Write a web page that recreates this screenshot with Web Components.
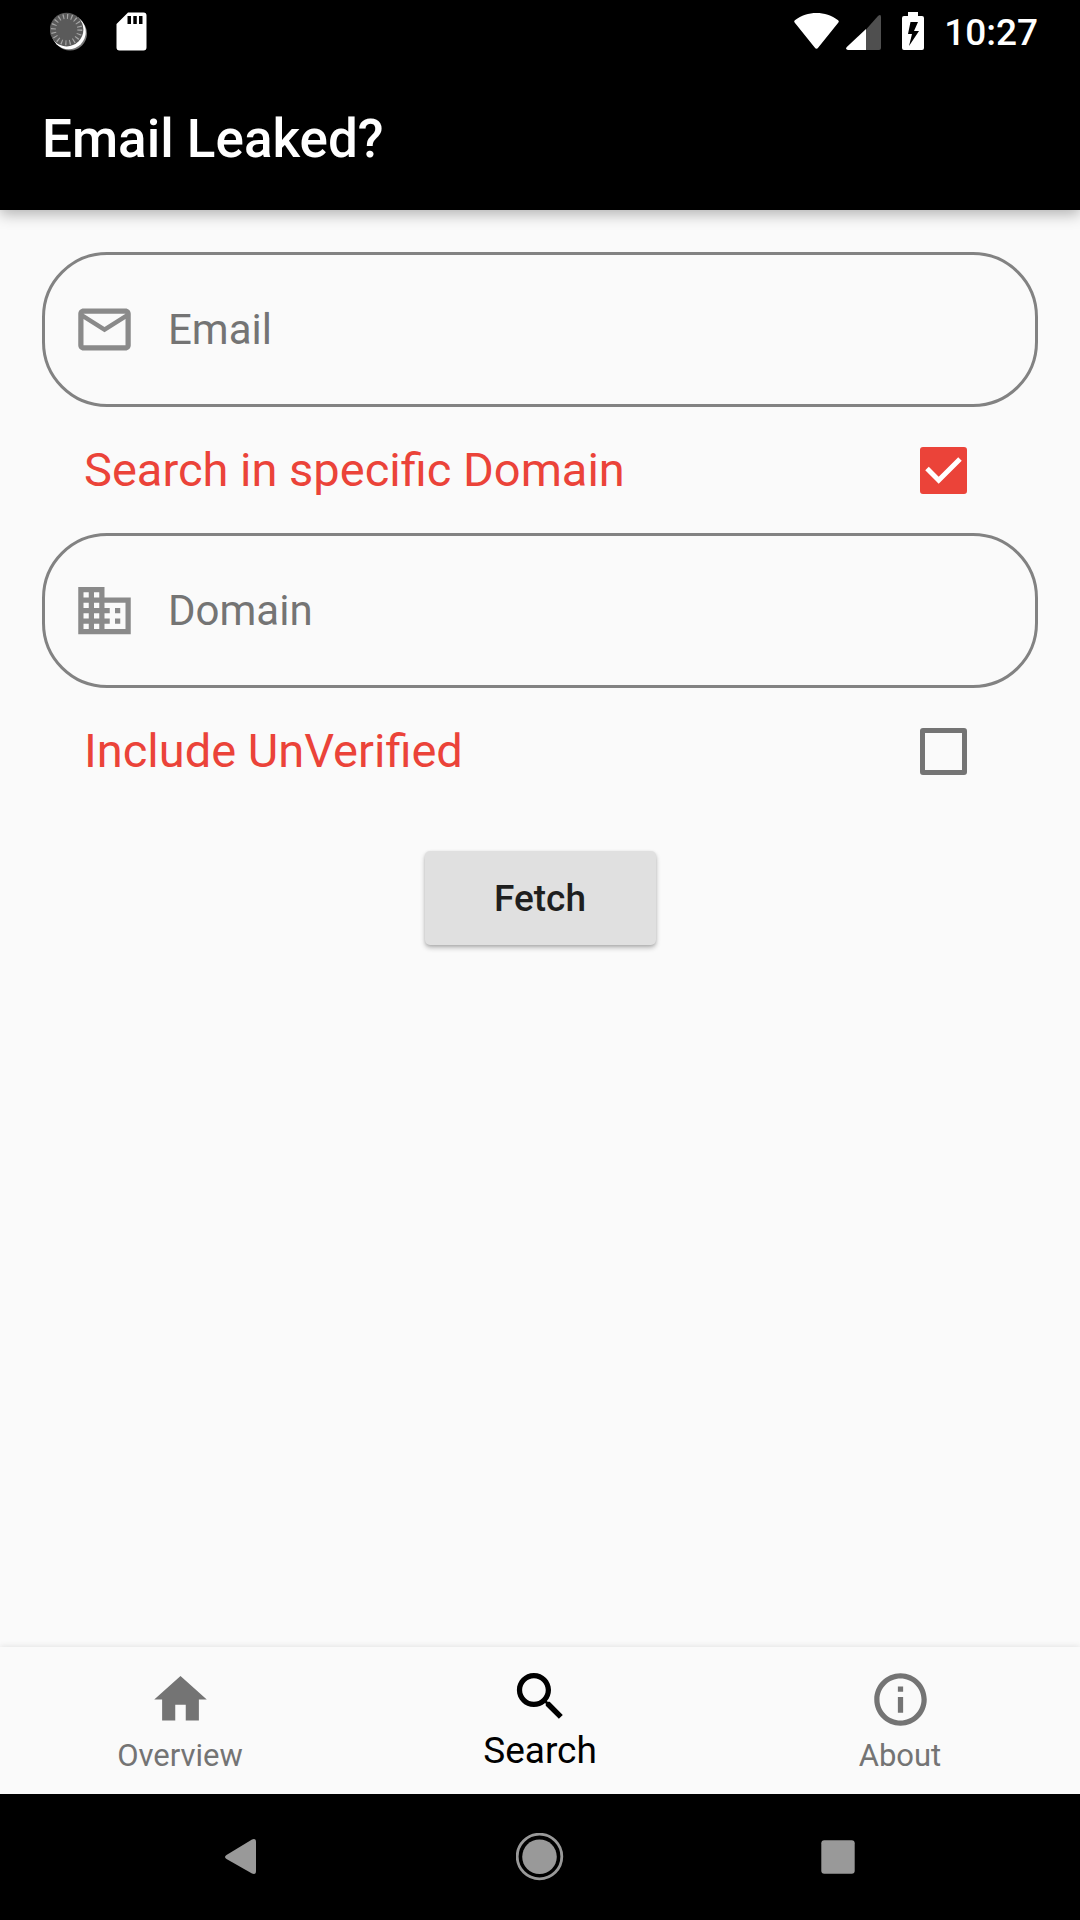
<!DOCTYPE html>
<html lang="en">
<head>
<meta charset="utf-8">
<meta name="viewport" content="width=device-width, initial-scale=1">
<title>Email Leaked?</title>
<style>
  html, body { margin: 0; }
  body { background: #fafafa; font-family: Roboto, "Liberation Sans", sans-serif; }
</style>
</head>
<body>
<leak-app></leak-app>
<script>
const define = (name, html, setup) => {
  const template = document.createElement('template');
  template.innerHTML = html;
  customElements.define(name, class extends HTMLElement {
    constructor() {
      super();
      this.attachShadow({ mode: 'open' }).append(template.content.cloneNode(true));
    }
    connectedCallback() {
      if (setup) setup(this, this.shadowRoot);
    }
  });
};

const ICONS = {
  mail: 'M20 4H4c-1.1 0-1.99.9-1.99 2L2 18c0 1.1.9 2 2 2h16c1.1 0 2-.9 2-2V6c0-1.1-.9-2-2-2zm0 14H4V8l8 5 8-5v10zm-8-7L4 6h16l-8 5z',
  domain: 'M12 7V3H2v18h20V7H12zM6 19H4v-2h2v2zm0-4H4v-2h2v2zm0-4H4V9h2v2zm0-4H4V5h2v2zm4 12H8v-2h2v2zm0-4H8v-2h2v2zm0-4H8V9h2v2zm0-4H8V5h2v2zm10 12h-8v-2h2v-2h-2v-2h2v-2h-2V9h8v10zm-2-8h-2v2h2v-2zm0 4h-2v2h2v-2z',
  home: 'M10 20v-6h4v6h5v-8h3L12 3 2 12h3v8z',
  search: 'M15.5 14h-.79l-.28-.27C15.41 12.59 16 11.11 16 9.5 16 5.91 13.09 3 9.5 3S3 5.91 3 9.5 5.91 16 9.5 16c1.61 0 3.09-.59 4.23-1.57l.27.28v.79l5 4.99L20.49 19l-4.99-5zm-6 0C7.01 14 5 11.99 5 9.5S7.01 5 9.5 5 14 7.01 14 9.5 11.99 14 9.5 14z',
  info: 'M11 17h2v-6h-2v6zm1-15C6.48 2 2 6.48 2 12s4.48 10 10 10 10-4.48 10-10S17.52 2 12 2zm0 18c-4.41 0-8-3.59-8-8s3.59-8 8-8 8 3.59 8 8-3.59 8-8 8zM11 9h2V7h-2v2z'
};

define('md-icon', `
<style>
  :host { display: block; flex: none; width: 63px; height: 63px; }
  svg { display: block; width: 100%; height: 100%; fill: currentColor; }
</style>
<svg viewBox="0 0 24 24" aria-hidden="true"><path/></svg>`,
  (el, root) => root.querySelector('path').setAttribute('d', ICONS[el.getAttribute('name')]));

define('status-bar', `
<style>
  :host { display: flex; justify-content: space-between; box-sizing: border-box; height: 63px;
          padding: 12px 42px 0 50px; background: #000; color: #fff; }
  div { display: flex; align-items: flex-start; }
  .left { gap: 28px; }
  .right { gap: 20px; }
  .net { gap: 6px; }
  svg { display: block; }
  time { font-size: 37px; line-height: 42px; font-weight: 500; }
</style>
<div class="left">
  <svg width="38" height="40" viewBox="0 0 38 40" aria-hidden="true">
    <circle cx="20" cy="21.5" r="17" fill="#777"/>
    <circle cx="18.6" cy="20" r="17.2" fill="#fff"/>
    <circle cx="16.6" cy="17.6" r="16.8" fill="#5a5a5a"/>
    <circle cx="16.6" cy="17.6" r="13.2" fill="none" stroke="#a5a5a5" stroke-width="5" stroke-dasharray="1.2 2.947"/>
  </svg>
  <svg width="32" height="40" viewBox="0 0 32 40" aria-hidden="true">
    <path fill="#fff" fill-rule="evenodd" d="M12 .5H27.500Q30.500.5 30.500 3.500V35.500Q30.500 38.500 27.500 38.500H3.500Q.5 38.500.5 35.500V12ZM11.500 4V12H15V4ZM17.300 4V12H20.800V4ZM23 4V12H26.500V4Z"/>
  </svg>
</div>
<div class="right">
  <div class="net">
    <svg width="46" height="40" viewBox="0 0 46 40" aria-hidden="true">
      <path fill="#fff" d="M.8 10.800Q-.6 9.400 1.200 8C13-1.500 32-1.500 43.800 8Q45.600 9.400 44.200 10.800L24.300 35.600Q22.500 38 20.700 35.600Z"/>
    </svg>
    <svg width="36" height="40" viewBox="0 0 36 40" aria-hidden="true">
      <path fill="#4f4f4f" d="M20 17.500 32 4Q35 1.500 35 5V36Q35 38 33 38H20Z"/>
      <path fill="#fff" d="M20 17V38H2Q-1 37.500.8 35Z"/>
    </svg>
  </div>
  <svg width="22" height="40" viewBox="0 0 22 40" aria-hidden="true">
    <path fill="#fff" fill-rule="evenodd" d="M6 0H16V4H20Q22 4 22 6V36Q22 38 20 38H2Q0 38 0 36V6Q0 4 2 4H6ZM8.500 10 6 22H10L7 34 17 19H12L16 10Z"/>
  </svg>
  <time>10:27</time>
</div>`);

define('app-bar', `
<style>
  :host { display: flex; align-items: center; box-sizing: border-box; height: 147px; padding: 4px 42px 0;
          background: #000; color: #fff; box-shadow: 0 4px 14px rgba(0,0,0,.3); }
  h1 { margin: 0; font-size: 53px; line-height: 62px; font-weight: 500; }
</style>
<h1><slot></slot></h1>`);

define('text-field', `
<style>
  :host { display: block; }
  label { display: flex; align-items: center; gap: 32px; box-sizing: border-box; height: 155px;
          padding: 0 28px; border: 3px solid #828282; border-radius: 65px; color: #8a8a8a; cursor: text; }
  input { flex: 1; min-width: 0; padding: 0; border: 0; outline: 0; background: none;
          font: 400 42px/50px Roboto, "Liberation Sans", sans-serif; color: #212121; }
  input::placeholder { color: #747474; opacity: 1; }
</style>
<label><slot name="icon"></slot><input></label>`,
  (el, root) => {
    const input = root.querySelector('input');
    input.type = el.getAttribute('type');
    input.placeholder = el.getAttribute('label');
    input.setAttribute('aria-label', el.getAttribute('label'));
  });

define('check-row', `
<style>
  :host { display: block; }
  label { display: flex; align-items: center; justify-content: space-between; height: 126px;
          padding: 0 71px 0 42px; color: #eb4339; font-size: 47px; line-height: 56px; }
  .box { display: grid; flex: none; }
  input, svg { grid-area: 1 / 1; width: 47px; height: 47px; margin: 0; }
  input { appearance: none; box-sizing: border-box; border: 5px solid #747474; border-radius: 3px; }
  input:checked { border-color: #eb4339; background: #eb4339; }
  svg { display: none; pointer-events: none; fill: none; stroke: #fff; stroke-width: 5; }
  input:checked + svg { display: block; }
</style>
<label><span><slot></slot></span>
  <span class="box"><input type="checkbox"><svg viewBox="0 0 47 47" aria-hidden="true"><path d="M7 21.500 18.700 33.200 40 12"/></svg></span>
</label>`,
  (el, root) => { root.querySelector('input').checked = el.hasAttribute('checked'); });

define('raised-button', `
<style>
  :host { display: block; }
  button { display: block; min-width: 231px; height: 94px; padding: 2px 42px 0; border: 0; border-radius: 5px;
           background: #e0e0e0; color: #1f1f1f; font: 500 37px/44px Roboto, "Liberation Sans", sans-serif;
           box-shadow: 0 3px 5px rgba(0,0,0,.24), 0 1px 3px rgba(0,0,0,.12); }
</style>
<button type="button"><slot></slot></button>`);

define('tab-item', `
<style>
  :host { display: block; flex: 1; color: #747474; font-size: 31px; line-height: 40px; }
  :host([active]) { color: #000; font-size: 37px; line-height: 44px; }
  a { display: flex; flex-direction: column; align-items: center; gap: 5px; padding-top: 21px;
      color: inherit; text-decoration: none; }
  :host([active]) a { gap: 1px; padding-top: 18px; }
</style>
<a href="#"><slot name="icon"></slot><span><slot></slot></span></a>`,
  (el, root) => { if (el.hasAttribute('active')) root.querySelector('a').setAttribute('aria-current', 'page'); });

define('tab-bar', `
<style>
  :host { display: block; background: #fafafa; box-shadow: 0 -1px 6px rgba(0,0,0,.09); }
  nav { display: flex; height: 147px; }
</style>
<nav aria-label="Sections"><slot></slot></nav>`);

define('system-nav', `
<style>
  :host { display: flex; justify-content: center; align-items: center; gap: 250px; height: 126px; background: #000; }
  button { display: block; padding: 0; border: 0; background: none; }
  svg { display: block; fill: #999; }
</style>
<button aria-label="Back"><svg width="48" height="48" viewBox="0 0 48 48"><path d="M8.500 22 34 6.500Q38 5 38 9V38Q38 42 34 40.500L8.500 26Q5.500 24 8.500 22Z"/></svg></button>
<button aria-label="Home"><svg width="48" height="48" viewBox="0 0 48 48"><circle cx="23.500" cy="23.500" r="22.300" fill="none" stroke="#999" stroke-width="2.800"/><circle cx="23.500" cy="23.800" r="17.300"/></svg></button>
<button aria-label="Recent apps"><svg width="48" height="48" viewBox="0 0 48 48"><rect x="7.300" y="7.300" width="33.400" height="33.400" rx="3"/></svg></button>`);

define('leak-app', `
<style>
  :host { display: flex; flex-direction: column; min-height: 100vh; }
  app-bar { z-index: 1; }
  main { flex: 1; padding: 42px; }
  .action { display: flex; justify-content: center; padding-top: 37px; }
</style>
<status-bar></status-bar>
<app-bar>Email Leaked?</app-bar>
<main>
  <text-field type="email" label="Email"><md-icon slot="icon" name="mail"></md-icon></text-field>
  <check-row checked>Search in specific Domain</check-row>
  <text-field type="text" label="Domain"><md-icon slot="icon" name="domain"></md-icon></text-field>
  <check-row>Include UnVerified</check-row>
  <div class="action"><raised-button>Fetch</raised-button></div>
</main>
<tab-bar>
  <tab-item><md-icon slot="icon" name="home"></md-icon>Overview</tab-item>
  <tab-item active><md-icon slot="icon" name="search"></md-icon>Search</tab-item>
  <tab-item><md-icon slot="icon" name="info"></md-icon>About</tab-item>
</tab-bar>
<system-nav></system-nav>`);
</script>
</body>
</html>
